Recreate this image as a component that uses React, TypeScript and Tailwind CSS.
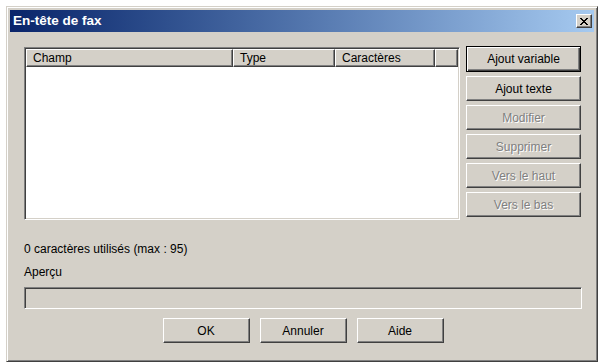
import React from 'react';

const raised =
  'border border-t-white border-l-white border-r-[#404040] border-b-[#404040] shadow-[inset_-1px_-1px_0_#808080]';

const sunken =
  'border border-t-[#808080] border-l-[#808080] border-r-white border-b-white shadow-[inset_1px_1px_0_#404040,inset_-1px_-1px_0_#d4d0c8]';

const WinButton: React.FC<{ label: string; disabled?: boolean; isDefault?: boolean; className?: string }> = ({
  label,
  disabled,
  isDefault,
  className = '',
}) => {
  const frame = isDefault
    ? 'border border-black shadow-[inset_1px_1px_0_#fff,inset_-1px_-1px_0_#404040,inset_-2px_-2px_0_#808080]'
    : raised;
  return (
    <div className={`${frame} ${className} flex items-center justify-center bg-[#d4d0c8]`}>
      <span className={disabled ? 'text-[#808080] [text-shadow:1px_1px_0_#fff]' : 'text-black'}>{label}</span>
    </div>
  );
};

const HeaderCell: React.FC<{ label?: string; className?: string }> = ({ label, className = '' }) => (
  <div className={`${raised} ${className} h-full flex items-center pl-[6px] bg-[#d4d0c8]`}>{label}</div>
);

const CloseIcon = () => (
  <svg width="8" height="7" viewBox="0 0 8 7" className="block">
    <path d="M0 0h2v1h1v1h2V1h1V0h2v1H7v1H6v1H5v1h1v1h1v1h1v1H6V6H5V5H3v1H2v1H0V6h1V5h1V4h1V3H2V2H1V1H0z" fill="#000" />
  </svg>
);

export default function App() {
  const sideButtons = [
    { label: 'Ajout variable', isDefault: true },
    { label: 'Ajout texte' },
    { label: 'Modifier', disabled: true },
    { label: 'Supprimer', disabled: true },
    { label: 'Vers le haut', disabled: true },
    { label: 'Vers le bas', disabled: true },
  ];

  return (
    <div className="w-[598px] h-[362px] bg-white pl-[6px] pt-[6px] font-['Liberation_Sans',Arial,sans-serif] text-[12px] leading-[14px] text-black">
      <div className="h-full flex flex-col bg-[#d4d0c8] border border-t-[#d4d0c8] border-l-[#d4d0c8] border-r-[#404040] border-b-[#404040] shadow-[inset_1px_1px_0_#fff,inset_-1px_-1px_0_#808080] p-[3px]">
        {/* title bar */}
        <div className="h-[22px] shrink-0 flex items-center justify-between pl-[3px] pr-[2px] bg-linear-to-r from-[#0a246a] to-[#a6caf0]">
          <span className="text-white font-bold text-[13.5px] leading-[16px]">En-tête de fax</span>
          <div className={`${raised} w-[16px] h-[14px] bg-[#d4d0c8] flex items-center justify-center`}>
            <CloseIcon />
          </div>
        </div>

        {/* client area */}
        <div className="flex-1 flex flex-col pl-[14px] pr-[12px] pt-[14px]">
          <div className="flex items-start gap-[6px]">
            <div className={`${sunken} w-[436px] h-[173px] mt-[1px] bg-white p-[1px] flex flex-col`}>
              <div className="h-[18px] flex">
                <HeaderCell label="Champ" className="w-[207px]" />
                <HeaderCell label="Type" className="w-[102px]" />
                <HeaderCell label="Caractères" className="w-[100px]" />
                <HeaderCell className="flex-1" />
              </div>
            </div>
            <div className="w-[115px] flex flex-col gap-[4px]">
              {sideButtons.map(b => (
                <WinButton
                  key={b.label}
                  label={b.label}
                  disabled={b.disabled}
                  isDefault={b.isDefault}
                  className={b.isDefault ? 'h-[26px]' : 'h-[25px]'}
                />
              ))}
            </div>
          </div>

          <div className="mt-[22px]">0 caractères utilisés (max : 95)</div>
          <div className="mt-[9px]">Aperçu</div>
          <div className={`${sunken} mt-[8px] h-[22px] bg-[#d4d0c8]`} />

          <div className="mt-[9px] flex justify-center gap-[10px]">
            <WinButton label="OK" className="w-[87px] h-[25px]" />
            <WinButton label="Annuler" className="w-[87px] h-[25px]" />
            <WinButton label="Aide" className="w-[87px] h-[25px]" />
          </div>
        </div>
      </div>
    </div>
  );
}
